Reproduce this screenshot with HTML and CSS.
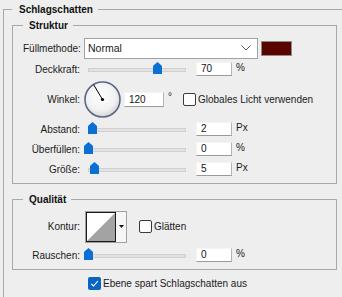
FILE: index.html
```html
<!DOCTYPE html>
<html lang="de">
<head>
  <meta charset="UTF-8" />
  <meta name="viewport" content="width=device-width, initial-scale=1.0" />
  <title>Schlagschatten</title>
  <link rel="stylesheet" href="styles.css">
</head>
<body>
  <fieldset class="group outer">
    <legend>Schlagschatten</legend>

    <fieldset class="group box struct">
      <legend>Struktur</legend>

      <div class="row row-fill">
        <label class="lbl">Füllmethode:</label>
        <div class="select">
          <span>Normal</span>
          <svg class="chev" width="10" height="6" viewBox="0 0 10 6"><polyline points="0.5,0.5 5,5 9.5,0.5" fill="none" stroke="#555" stroke-width="1"/></svg>
        </div>
        <div class="swatch"></div>
      </div>

      <div class="row">
        <label class="lbl">Deckkraft:</label>
        <div class="slider">
          <div class="track"></div>
          <svg class="thumb" style="left:69px" width="9" height="12" viewBox="0 0 9 12"><path d="M0 4.5 Q0 3.6 1 2.9 L4.5 0 L8 2.9 Q9 3.6 9 4.5 V12 H0 Z" fill="#0a70d4"/></svg>
        </div>
        <div class="field">70</div>
        <span class="unit">%</span>
      </div>

      <div class="row row-angle">
        <label class="lbl">Winkel:</label>
        <svg class="dial" width="38" height="39" viewBox="0 0 38 39">
          <defs>
            <radialGradient id="dialbg" cx="45%" cy="40%" r="60%">
              <stop offset="0%" stop-color="#ffffff"/>
              <stop offset="70%" stop-color="#f1f1f1"/>
              <stop offset="100%" stop-color="#d6d6d8"/>
            </radialGradient>
          </defs>
          <circle cx="18.5" cy="19.5" r="17.5" fill="url(#dialbg)" stroke="#5a6784" stroke-width="1.6"/>
          <line x1="18.5" y1="19.5" x2="9.5" y2="4.5" stroke="#000" stroke-width="1"/>
          <circle cx="18.5" cy="19.5" r="1.6" fill="#000"/>
        </svg>
        <div class="field field-wide">120</div>
        <span class="deg">°</span>
        <span class="check"></span>
        <span class="check-text">Globales Licht verwenden</span>
      </div>

      <div class="row">
        <label class="lbl">Abstand:</label>
        <div class="slider">
          <div class="track"></div>
          <svg class="thumb" style="left:4px" width="9" height="12" viewBox="0 0 9 12"><path d="M0 4.5 Q0 3.6 1 2.9 L4.5 0 L8 2.9 Q9 3.6 9 4.5 V12 H0 Z" fill="#0a70d4"/></svg>
        </div>
        <div class="field">2</div>
        <span class="unit">Px</span>
      </div>

      <div class="row">
        <label class="lbl">Überfüllen:</label>
        <div class="slider">
          <div class="track"></div>
          <svg class="thumb" style="left:0px" width="9" height="12" viewBox="0 0 9 12"><path d="M0 4.5 Q0 3.6 1 2.9 L4.5 0 L8 2.9 Q9 3.6 9 4.5 V12 H0 Z" fill="#0a70d4"/></svg>
        </div>
        <div class="field">0</div>
        <span class="unit">%</span>
      </div>

      <div class="row">
        <label class="lbl">Größe:</label>
        <div class="slider">
          <div class="track"></div>
          <svg class="thumb" style="left:6px" width="9" height="12" viewBox="0 0 9 12"><path d="M0 4.5 Q0 3.6 1 2.9 L4.5 0 L8 2.9 Q9 3.6 9 4.5 V12 H0 Z" fill="#0a70d4"/></svg>
        </div>
        <div class="field">5</div>
        <span class="unit">Px</span>
      </div>
    </fieldset>

    <fieldset class="group box quality">
      <legend>Qualität</legend>

      <div class="row row-contour">
        <label class="lbl">Kontur:</label>
        <svg class="contour" width="42" height="32" viewBox="0 0 42 32">
          <rect x="0.5" y="0.5" width="41" height="31" fill="#f6f6f6" stroke="#a0a0a0"/>
          <rect x="1.5" y="1.5" width="29" height="29" fill="#ffffff" stroke="#1a1a1a"/>
          <polygon points="2,30 30,2 30,30" fill="#a3a3a3"/>
          <polygon points="34,14 39,14 36.5,17" fill="#111"/>
        </svg>
        <span class="check check-gap"></span>
        <span class="check-text">Glätten</span>
      </div>

      <div class="row row-noise">
        <label class="lbl">Rauschen:</label>
        <div class="slider">
          <div class="track"></div>
          <svg class="thumb" style="left:0px" width="9" height="12" viewBox="0 0 9 12"><path d="M0 4.5 Q0 3.6 1 2.9 L4.5 0 L8 2.9 Q9 3.6 9 4.5 V12 H0 Z" fill="#0a70d4"/></svg>
        </div>
        <div class="field">0</div>
        <span class="unit">%</span>
      </div>
    </fieldset>

    <div class="row row-knockout">
      <span class="check checked">
        <svg width="13" height="13" viewBox="0 0 13 13"><polyline points="3.2,6.8 5.5,9 9.8,4.2" fill="none" stroke="#fff" stroke-width="1.1"/></svg>
      </span>
      <span class="check-text">Ebene spart Schlagschatten aus</span>
    </div>
  </fieldset>
</body>
</html>
```

FILE: styles.css
```css
html, body {
  margin: 0;
  height: 100%;
}
body {
  background: #eeeeee;
  font-family: "Liberation Sans", Arial, sans-serif;
  font-size: 10px;
  line-height: 13px;
  color: #1a1a1a;
  overflow: hidden;
}
fieldset {
  margin: 0;
  min-width: 0;
  border: 1px solid #a9a9a9;
}
legend {
  font-weight: bold;
  color: #111;
}
.outer {
  margin: 3px 0 0 3px;
  width: 339px;
  box-sizing: border-box;
  padding: 0 0 4px 8px;
  border-right: none;
  border-bottom: none;
}
.outer > legend {
  padding: 0 5px 0 7px;
}
.box {
  width: 325px;
  box-sizing: border-box;
  padding: 5px 0 4px 10px;
}
.box > legend {
  padding: 0 5px 0 6px;
}
.struct {
  margin-top: 3px;
}
.quality {
  margin-top: 9px;
}
.row {
  display: flex;
  align-items: center;
  height: 20px;
}
.row-fill {
  height: 22px;
}
.row-angle {
  height: 40px;
}
.row-contour {
  height: 31px;
}
.row-noise {
  margin-top: 3px;
}
.row-knockout {
  margin: 3px 0 0 76px;
}
.lbl {
  width: 57px;
  margin-right: 4px;
  text-align: right;
  white-space: nowrap;
}
.select {
  width: 174px;
  height: 21px;
  box-sizing: border-box;
  background: #fff;
  border: 1px solid #a2a2a2;
  display: flex;
  align-items: center;
  justify-content: space-between;
  padding: 0 6px 0 3px;
  font-size: 10.5px;
}
.chev {
  display: block;
}
.swatch {
  width: 31px;
  height: 15px;
  box-sizing: border-box;
  margin-left: 3px;
  background: #5a0400;
  border: 1px solid #8c8c8c;
}
.slider {
  position: relative;
  width: 102px;
  height: 14px;
}
.track {
  position: absolute;
  left: 4px;
  right: 0;
  top: 6px;
  height: 4px;
  box-sizing: border-box;
  background: #e2e2e2;
  border: 1px solid #d0d0d0;
}
.thumb {
  position: absolute;
  top: 0;
  display: block;
}
.field {
  width: 36px;
  height: 14px;
  box-sizing: border-box;
  margin-left: 10px;
  padding-left: 4px;
  background: #fff;
  border: 1px solid;
  border-color: #f4f4f4 #b4b4b4 #9a9a9a #f4f4f4;
  line-height: 12px;
  color: #141414;
}
.field-wide {
  width: 40px;
  height: 15px;
  margin-left: 2px;
  line-height: 13px;
}
.unit {
  margin-left: 4px;
  align-self: flex-start;
  margin-top: 2px;
}
.dial {
  display: block;
}
.deg {
  margin-left: 4px;
  align-self: flex-start;
  margin-top: 11px;
}
.check {
  width: 13px;
  height: 13px;
  box-sizing: border-box;
  border: 1px solid #3a3a3a;
  border-radius: 2px;
  background: #fdfdfd;
  margin-left: 11px;
  flex-shrink: 0;
}
.check-gap {
  margin-left: 12px;
}
.check.checked {
  margin-left: 0;
  border: none;
  background: #0a64c2;
}
.check.checked svg {
  display: block;
}
.check-text {
  margin-left: 2px;
  white-space: nowrap;
}
.contour {
  display: block;
  margin-left: 1px;
}
```
